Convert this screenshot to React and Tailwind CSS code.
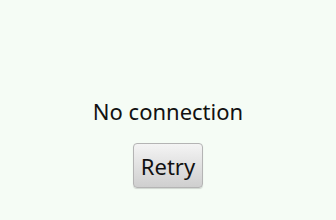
export default function App() {
  return (
    <div
      className="w-[336px] h-[220px] bg-[#f5fcf5] flex flex-col items-center pt-[96px]"
      style={{ fontFamily: '"Noto Sans", sans-serif' }}
    >
      <p className="text-[22px] leading-[30px] text-[#111]">No connection</p>
      <button className="mt-[17px] w-[70px] h-[45px] rounded-[4px] border border-[#b4b4b4] bg-gradient-to-b from-[#f4f4f4] to-[#cfcfcf] text-[22px] leading-none text-[#111] shadow-[0_1px_1px_rgba(0,0,0,0.15)]">
        Retry
      </button>
    </div>
  );
}
